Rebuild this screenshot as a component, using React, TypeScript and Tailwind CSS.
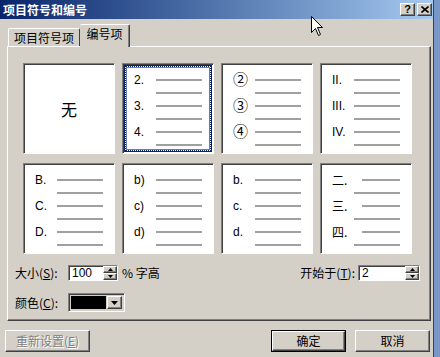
import React from 'react';

const raised =
  'border border-t-white border-l-white border-r-[#404040] border-b-[#404040] shadow-[inset_-1px_-1px_0_#808080]';
const sunken =
  'border border-t-[#808080] border-l-[#808080] border-r-white border-b-white shadow-[inset_1px_1px_0_#404040]';

type CardProps = {
  labels?: string[];
  selected?: boolean;
  cjk?: boolean;
  circled?: boolean;
  none?: boolean;
};

function ListCard({ labels, selected, cjk, circled, none }: CardProps) {
  if (none) {
    return (
      <div className={`bg-white ${sunken} flex items-center justify-center`}>
        <span className="text-[16px] text-black font-['Noto_Sans_CJK_SC',sans-serif]">无</span>
      </div>
    );
  }

  const rows = [0, 1, 2, 3, 4, 5];

  return (
    <div className={`relative bg-white ${sunken} pt-[9px]`}>
      {selected && (
        <div className="absolute inset-[1px] border border-[#0a246a] pointer-events-none">
          <div className="h-full w-full border border-dotted border-[#0a246a]">
            <div className="h-full w-full border border-[#0a246a]/60" />
          </div>
        </div>
      )}
      {rows.map((r) => {
        const label = r % 2 === 0 ? labels?.[r / 2] : undefined;
        const shortLine = cjk && label;
        return (
          <div key={r} className="flex h-[13px] items-center pl-[11px]">
            <span
              className={`leading-none text-black ${circled ? 'text-[15px]' : 'text-[12px]'} ${
                shortLine ? 'w-[30px]' : 'w-[22px]'
              } ${cjk ? "font-['Noto_Sans_CJK_SC',sans-serif]" : ''}`}
            >
              {label ?? ''}
            </span>
            <div className={`h-[2px] bg-[#a0a0a0] ${shortLine ? 'w-[38px]' : 'w-[46px]'}`} />
          </div>
        );
      })}
    </div>
  );
}

function Spinner() {
  return (
    <div className="flex w-[14px] flex-col">
      <div className={`flex h-[7px] items-center justify-center bg-[#d4d0c8] ${raised}`}>
        <svg width="5" height="3" viewBox="0 0 5 3">
          <path d="M2.5 0 L5 3 L0 3 Z" fill="#000" />
        </svg>
      </div>
      <div className={`flex h-[7px] items-center justify-center bg-[#d4d0c8] ${raised}`}>
        <svg width="5" height="3" viewBox="0 0 5 3">
          <path d="M0 0 L5 0 L2.5 3 Z" fill="#000" />
        </svg>
      </div>
    </div>
  );
}

export default function App() {
  return (
    <div className="relative flex h-[357px] w-[440px] overflow-hidden bg-[#7a96c8] text-[12px] text-black font-['Liberation_Sans','Noto_Sans_CJK_SC',sans-serif]">
      <div className="flex h-full w-[434px] flex-col border-r border-[#404040] bg-[#d4d0c8]">
        {/* title bar */}
        <div className="flex h-[19px] items-center justify-between bg-gradient-to-r from-[#0a246a] to-[#a6caf0] pl-[3px] pr-[1px]">
          <span className="text-[12px] font-bold leading-none text-white font-['Noto_Sans_CJK_SC',sans-serif]">
            项目符号和编号
          </span>
          <div className="flex gap-[2px]">
            <div className={`flex h-[13px] w-[15px] items-center justify-center bg-[#d4d0c8] ${raised}`}>
              <span className="text-[11px] font-bold leading-none">?</span>
            </div>
            <div className={`flex h-[13px] w-[15px] items-center justify-center bg-[#d4d0c8] ${raised}`}>
              <svg width="8" height="7" viewBox="0 0 8 7">
                <path d="M0.5 0.5 L7.5 6.5 M7.5 0.5 L0.5 6.5" stroke="#000" strokeWidth="1.6" />
              </svg>
            </div>
          </div>
        </div>

        {/* tabs */}
        <div className="mt-[3px] flex h-[24px] items-end pl-[8px] font-['Noto_Sans_CJK_SC',sans-serif]">
          <div className="flex h-[18px] w-[72px] items-center justify-center border-l border-t border-r border-t-white border-l-white border-r-[#404040] rounded-t-[2px]">
            <span className="text-[12px] leading-none">项目符号项</span>
          </div>
          <div className="relative z-10 -mb-px flex h-[23px] w-[50px] items-start justify-center border-t border-r border-t-white border-r-[#404040] bg-[#d4d0c8] pt-[3px] shadow-[inset_-1px_0_0_#808080] rounded-t-[2px]">
            <span className="text-[12px] leading-none">编号项</span>
          </div>
        </div>

        {/* panel */}
        <div className="ml-[7px] flex h-[275px] w-[424px] flex-col border border-t-white border-l-white border-r-[#404040] border-b-[#404040] shadow-[inset_-1px_-1px_0_#808080]">
          <div className="ml-[15px] mt-[16px] grid grid-cols-[repeat(4,92px)] grid-rows-[91px_91px] gap-x-[7px] gap-y-[9px]">
            <ListCard none />
            <ListCard selected labels={['2.', '3.', '4.']} />
            <ListCard circled labels={['②', '③', '④']} />
            <ListCard labels={['II.', 'III.', 'IV.']} />
            <ListCard labels={['B.', 'C.', 'D.']} />
            <ListCard labels={['b)', 'c)', 'd)']} />
            <ListCard labels={['b.', 'c.', 'd.']} />
            <ListCard cjk labels={['二.', '三.', '四.']} />
          </div>

          <div className="ml-[7px] mr-[10px] mt-[11px] flex h-[16px] items-center">
            <span className="w-[53px] font-['Noto_Sans_CJK_SC',sans-serif]">
              大小(<u>S</u>):
            </span>
            <div className={`flex h-[16px] w-[50px] bg-white ${sunken}`}>
              <span className="flex-1 pl-[3px] text-[12px] leading-[14px]">100</span>
              <Spinner />
            </div>
            <span className="ml-[4px] font-['Noto_Sans_CJK_SC',sans-serif]">% 字高</span>
            <span className="ml-auto mr-[3px] font-['Noto_Sans_CJK_SC',sans-serif]">
              开始于(<u>T</u>):
            </span>
            <div className={`flex h-[16px] w-[62px] bg-white ${sunken}`}>
              <span className="flex-1 pl-[3px] text-[12px] leading-[14px]">2</span>
              <Spinner />
            </div>
          </div>

          <div className="ml-[7px] mt-[12px] flex h-[19px] items-center">
            <span className="w-[53px] font-['Noto_Sans_CJK_SC',sans-serif]">
              颜色(<u>C</u>):
            </span>
            <div className={`flex h-[19px] w-[57px] items-center gap-[1px] bg-[#d4d0c8] p-[2px] ${sunken}`}>
              <div className="h-full w-[35px] bg-black" />
              <div className={`flex h-full flex-1 items-center justify-center ${raised}`}>
                <svg width="7" height="4" viewBox="0 0 7 4">
                  <path d="M0 0 L7 0 L3.5 4 Z" fill="#000" />
                </svg>
              </div>
            </div>
          </div>
        </div>

        {/* buttons */}
        <div className="mt-[9px] flex h-[22px] pl-[5px] font-['Noto_Sans_CJK_SC',sans-serif]">
          <div className={`flex w-[85px] items-center justify-center ${raised}`}>
            <span className="text-[#808080] [text-shadow:1px_1px_0_#fff]">重新设置(<u>E</u>)</span>
          </div>
          <div className="ml-auto flex w-[75px] border border-black">
            <div className={`flex flex-1 items-center justify-center ${raised}`}>确定</div>
          </div>
          <div className={`ml-[9px] mr-[3px] flex w-[75px] items-center justify-center ${raised}`}>取消</div>
        </div>
      </div>

      {/* mouse pointer */}
      <svg className="absolute left-[311px] top-[16px]" width="13" height="21" viewBox="0 0 13 21">
        <path
          d="M0.5 0.5 L0.5 16.5 L4.5 12.5 L7.5 19.5 L9.5 18.5 L6.5 11.5 L11.5 11.5 Z"
          fill="#fff"
          stroke="#000"
          strokeWidth="1"
        />
      </svg>
    </div>
  );
}
